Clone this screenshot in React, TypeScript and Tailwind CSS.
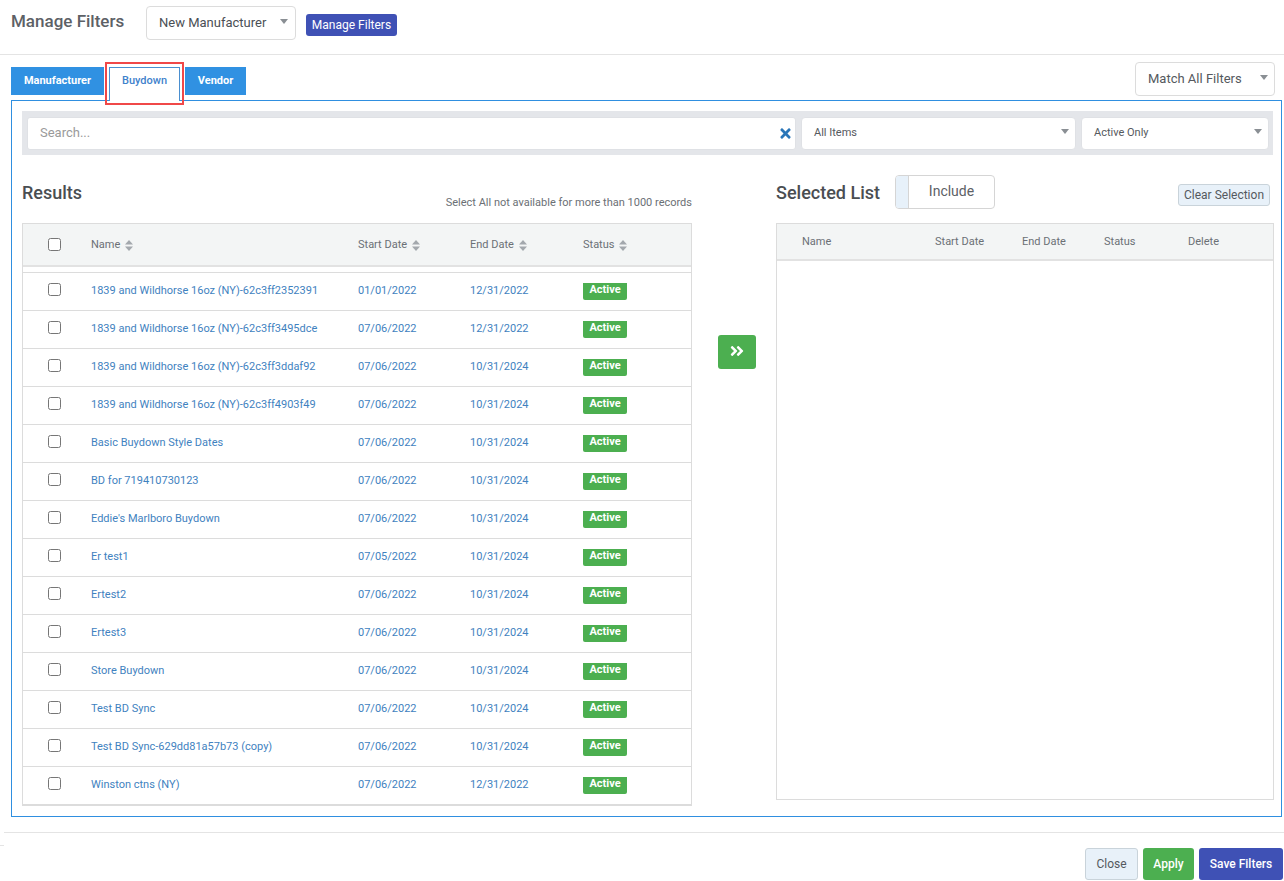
import { FaAngleDoubleRight, FaTimes } from 'react-icons/fa'

const rows = [
  ['1839 and Wildhorse 16oz (NY)-62c3ff2352391', '01/01/2022', '12/31/2022'],
  ['1839 and Wildhorse 16oz (NY)-62c3ff3495dce', '07/06/2022', '12/31/2022'],
  ['1839 and Wildhorse 16oz (NY)-62c3ff3ddaf92', '07/06/2022', '10/31/2024'],
  ['1839 and Wildhorse 16oz (NY)-62c3ff4903f49', '07/06/2022', '10/31/2024'],
  ['Basic Buydown Style Dates', '07/06/2022', '10/31/2024'],
  ['BD for 719410730123', '07/06/2022', '10/31/2024'],
  ["Eddie's Marlboro Buydown", '07/06/2022', '10/31/2024'],
  ['Er test1', '07/05/2022', '10/31/2024'],
  ['Ertest2', '07/06/2022', '10/31/2024'],
  ['Ertest3', '07/06/2022', '10/31/2024'],
  ['Store Buydown', '07/06/2022', '10/31/2024'],
  ['Test BD Sync', '07/06/2022', '10/31/2024'],
  ['Test BD Sync-629dd81a57b73 (copy)', '07/06/2022', '10/31/2024'],
  ['Winston ctns (NY)', '07/06/2022', '12/31/2022'],
]

function Caret() {
  return <span className="mb-[4px] w-0 h-0 border-x-[4px] border-x-transparent border-t-[5px] border-t-[#8a8f94]" />
}

function SortIcon() {
  return (
    <svg width="8" height="11" viewBox="0 0 8 11" className="ml-[5px]" fill="#a3a8ad">
      <path d="M4 0L8 4.5H0Z" />
      <path d="M4 11L0 6.5H8Z" />
    </svg>
  )
}

function SelectBox({ label, className }: { label: string; className: string }) {
  return (
    <div className={`flex items-center justify-between bg-white rounded-[4px] ${className}`}>
      <span>{label}</span>
      <Caret />
    </div>
  )
}

function HeadCell({ label, className }: { label: string; className: string }) {
  return (
    <div className={`flex items-center mt-[2px] ${className}`}>
      {label}
      <SortIcon />
    </div>
  )
}

export default function App() {
  return (
    <div className="w-[1284px] h-[881px] overflow-hidden bg-white font-['Roboto',sans-serif] text-[#495057]">
      <div className="h-[55px] border-b border-[#e4e4e4] pl-[11px] pt-[6px] flex items-start">
        <h1 className="text-[17px] leading-[20px] mt-[5px] font-medium text-[#5d6166] w-[135px]">Manage Filters</h1>
        <SelectBox
          label="New Manufacturer"
          className="w-[150px] h-[34px] border border-[#dcdcdc] pl-[12px] pr-[7px] text-[13px] text-[#4a4f55]"
        />
        <button className="ml-[10px] mt-[8px] w-[91px] h-[22px] rounded-[3px] bg-[#3f51b5] text-white text-[12px] font-normal">
          Manage Filters
        </button>
      </div>

      <div className="h-[45px] pl-[11px] pr-[9px] flex items-start justify-between">
        <div className="flex items-start mt-[12px] text-[11px] font-bold text-white">
          <div className="w-[93px] h-[28px] bg-[#3091e2] flex items-center justify-center">Manufacturer</div>
          <div className="relative ml-[5px] mr-[5px] w-[71px] h-[34px] bg-white border-x border-t border-[#4a8fd0] flex items-start justify-center pt-[5px] font-medium text-[#3f82cc] z-10">
            Buydown
            <div className="absolute left-[-5px] top-[-6px] w-[79px] h-[43px] border-2 border-[#f04848]" />
          </div>
          <div className="w-[61px] h-[28px] bg-[#3091e2] flex items-center justify-center">Vendor</div>
        </div>
        <SelectBox
          label="Match All Filters"
          className="mt-[7px] w-[140px] h-[34px] border border-[#dcdcdc] pl-[12px] pr-[6px] text-[13px] text-[#55595e]"
        />
      </div>

      <div className="ml-[11px] w-[1271px] h-[717px] border border-[#2f8fe0] pl-[10px] pr-[7px] pt-[10px]">
        <div className="h-[44px] bg-[#e4e6ea] w-[1251px] pl-[5px] pt-[6px] flex gap-[5px]">
          <div className="relative w-[769px] h-[33px] bg-white border border-[#dfe1e5] rounded-[3px] pl-[12px] pb-[2px] flex items-center text-[13px] text-[#9a9a9a]">
            Search...
            <FaTimes className="absolute right-[2px] top-[8px] text-[#2a76b8] text-[15px]" />
          </div>
          <SelectBox label="All Items" className="w-[275px] h-[33px] border border-[#dfe1e5] pl-[12px] pr-[6px] text-[11px] text-[#55595e]" />
          <SelectBox label="Active Only" className="w-[188px] h-[33px] border border-[#dfe1e5] pl-[12px] pr-[6px] text-[11px] text-[#55595e]" />
        </div>

        <div className="flex items-start">
          <div className="w-[670px] shrink-0">
            <div className="h-[68px] flex justify-between">
              <h2 className="mt-[27px] text-[18px] leading-[22px] font-medium text-[#4a4e52]">Results</h2>
              <p className="mt-[41px] text-[11px] leading-[14px] text-[#6b7075]">
                Select All not available for more than 1000 records
              </p>
            </div>
            <div className="border border-[#dcdcdc] w-[670px]">
              <div className="h-[43px] bg-[#f3f5f5] border-b-[2px] border-[#e2e2e2] flex items-center text-[11px] text-[#6b7075]">
                <div className="w-[68px] pl-[25px] flex items-center">
                  <input type="checkbox" className="w-[13px] h-[13px]" />
                </div>
                <HeadCell label="Name" className="w-[267px]" />
                <HeadCell label="Start Date" className="w-[112px]" />
                <HeadCell label="End Date" className="w-[113px]" />
                <HeadCell label="Status" className="flex-1" />
              </div>
              <div className="h-[6px] border-b border-[#dcdcdc]" />
              {rows.map((r) => (
                <div key={r[0]} className="h-[38px] flex items-center border-b border-[#dcdcdc] text-[11px] text-[#3f82c0]">
                  <div className="w-[68px] pl-[25px] flex items-center">
                    <input type="checkbox" className="w-[13px] h-[13px] mb-[4px]" />
                  </div>
                  <div className="w-[267px]">{r[0]}</div>
                  <div className="w-[112px]">{r[1]}</div>
                  <div className="w-[113px]">{r[2]}</div>
                  <div className="flex-1">
                    <span className="block w-[44px] h-[17px] rounded-b-[2px] bg-[#4caf50] text-white text-[11px] leading-[13px] font-bold text-center">
                      Active
                    </span>
                  </div>
                </div>
              ))}
            </div>
          </div>

          <div className="w-[84px] shrink-0 pt-[180px] pl-[6px] flex justify-center">
            <button className="w-[38px] h-[34px] rounded-[3px] bg-[#4caf50] text-white flex items-center justify-center text-[16px]">
              <FaAngleDoubleRight className="mb-[3px]" />
            </button>
          </div>

          <div className="w-[498px] shrink-0">
            <div className="h-[68px] flex items-start">
              <h2 className="mt-[27px] w-[119px] text-[18px] leading-[22px] font-medium text-[#4a4e52]">Selected List</h2>
              <div className="mt-[20px] w-[100px] h-[34px] border border-[#d5d5d5] rounded-[4px] flex overflow-hidden">
                <div className="w-[13px] bg-[#e7f1fa] border-r border-[#d5d5d5]" />
                <div className="flex-1 text-center text-[14px] leading-[30px] text-[#5d6166]">Include</div>
              </div>
              <button className="ml-auto mr-[4px] mt-[29px] w-[92px] h-[22px] rounded-[3px] bg-[#e8f1f9] border border-[#c9d3da] text-[12px] text-[#55595e]">
                Clear Selection
              </button>
            </div>
            <div className="h-[577px] border border-[#dcdcdc]">
              <div className="h-[37px] pt-[1px] bg-[#f3f5f5] border-b-[2px] border-[#e2e2e2] flex items-center text-[11px] text-[#6b7075]">
                <div className="w-[158px] pl-[25px]">Name</div>
                <div className="w-[87px]">Start Date</div>
                <div className="w-[82px]">End Date</div>
                <div className="w-[84px]">Status</div>
                <div>Delete</div>
              </div>
            </div>
          </div>
        </div>
      </div>

      <div className="relative ml-[4px] mt-[15px] h-[49px] border-t border-[#e4e4e4] flex justify-end items-start pt-[15px] pr-[1px] gap-[5px] text-[12px] font-medium">
        <div className="absolute left-[-4px] top-[12px] w-[4px] h-px bg-[#e4e4e4]" />
        <button className="w-[53px] h-[32px] rounded-[3px] bg-[#e8f1f9] border border-[#c9d3da] font-normal text-[#55595e]">Close</button>
        <button className="w-[51px] h-[32px] rounded-[3px] bg-[#4caf50] text-white">Apply</button>
        <button className="w-[84px] h-[32px] rounded-[3px] bg-[#3f51b5] text-white">Save Filters</button>
      </div>
    </div>
  )
}
